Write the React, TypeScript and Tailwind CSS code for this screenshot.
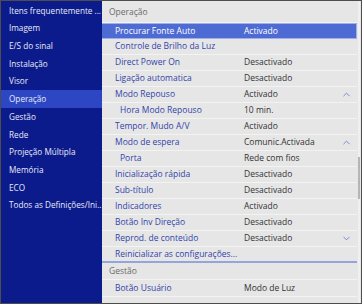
import { ChevronUp, ChevronDown } from "lucide-react";

type Row = {
  label: string;
  value?: string;
  sub?: boolean;
  selected?: boolean;
  chevron?: "up" | "down";
  last?: boolean;
};

const sideItems = [
  "Itens frequentemente ...",
  "Imagem",
  "E/S do sinal",
  "Instalação",
  "Visor",
  "Operação",
  "Gestão",
  "Rede",
  "Projeção Múltipla",
  "Memória",
  "ECO",
  "Todos as Definições/Ini...",
];

const rows: Row[] = [
  { label: "Procurar Fonte Auto", value: "Activado", selected: true },
  { label: "Controle de Brilho da Luz" },
  { label: "Direct Power On", value: "Desactivado" },
  { label: "Ligação automatica", value: "Desactivado" },
  { label: "Modo Repouso", value: "Activado", chevron: "up" },
  { label: "Hora Modo Repouso", value: "10 min.", sub: true },
  { label: "Tempor. Mudo A/V", value: "Activado" },
  { label: "Modo de espera", value: "Comunic.Activada", chevron: "up" },
  { label: "Porta", value: "Rede com fios", sub: true },
  { label: "Inicialização rápida", value: "Desactivado" },
  { label: "Sub-título", value: "Desactivado" },
  { label: "Indicadores", value: "Activado" },
  { label: "Botão Inv Direção", value: "Desactivado" },
  { label: "Reprod. de conteúdo", value: "Desactivado", chevron: "down" },
  { label: "Reinicializar as configurações...", last: true },
];

function MenuRow({ row }: { row: Row }) {
  return (
    <div
      className={
        row.selected
          ? "flex items-center h-[16px] shrink-0 bg-[#4d6bd3] text-white border border-[#9fb0ea] border-l-0"
          : row.last
          ? "flex items-center h-[16px] shrink-0 border-b-2 border-[#97a4dc] text-[#3344a8]"
          : "flex items-center h-[16px] shrink-0 border-b border-[#f3f3f3] text-[#3344a8]"
      }
    >
      <div className={row.sub ? "w-[142px] pl-[18px] whitespace-nowrap" : "w-[142px] pl-[13px] whitespace-nowrap"}>
        {row.label}
      </div>
      {row.value && (
        <div className={row.selected ? "flex-1 text-white" : "flex-1 text-[#333]"}>{row.value}</div>
      )}
      {row.chevron === "up" && <ChevronUp size={11} strokeWidth={1.5} className="mr-[5px] text-[#4a5fc4]" />}
      {row.chevron === "down" && <ChevronDown size={11} strokeWidth={1.5} className="mr-[5px] text-[#4a5fc4]" />}
    </div>
  );
}

export default function App() {
  return (
    <div
      className="w-[362px] h-[304px] flex border border-[#4d4d4d] overflow-hidden text-[8.5px] leading-none"
      style={{ fontFamily: '"Open Sans", "Noto Sans", sans-serif' }}
    >
      <div className="w-[101px] shrink-0 bg-[#0b1b8c] pt-[1px] text-[#e8eaf6] text-[8.2px]">
        {sideItems.map((item) => (
          <div
            key={item}
            className={
              item === "Operação"
                ? "h-[17.7px] flex items-center pl-[8px] bg-[#2d47c4] whitespace-nowrap"
                : "h-[17.7px] flex items-center pl-[8px] whitespace-nowrap"
            }
          >
            {item}
          </div>
        ))}
      </div>

      <div className="flex-1 flex bg-[#e6e6e6] overflow-hidden">
        <div className="flex-1 flex flex-col">
          <div className="h-[22px] shrink-0 flex items-center pl-[7px] pt-[2px] text-[#6b6b6b] border-b border-[#f3f3f3]">
            Operação
          </div>
          {rows.map((r) => (
            <MenuRow key={r.label} row={r} />
          ))}
          <div className="h-[17px] shrink-0 flex items-center pl-[7px] text-[#6b6b6b] border-b border-[#f3f3f3]">
            Gestão
          </div>
          <div className="h-[17px] shrink-0 flex items-center border-b border-[#f3f3f3] text-[#3344a8]">
            <div className="w-[142px] pl-[13px]">Botão Usuário</div>
            <div className="flex-1 text-[#333]">Modo de Luz</div>
          </div>
          <div className="h-[16px] shrink-0" />
        </div>
        <div className="w-[4px] shrink-0 flex flex-col items-center">
          <div className="w-[2px] h-[156px] bg-[#f0f0f0]" />
          <div className="w-[2px] h-[42px] bg-[#b5b5b5]" />
          <div className="w-[2px] flex-1 bg-[#f0f0f0]" />
        </div>
      </div>
    </div>
  );
}
